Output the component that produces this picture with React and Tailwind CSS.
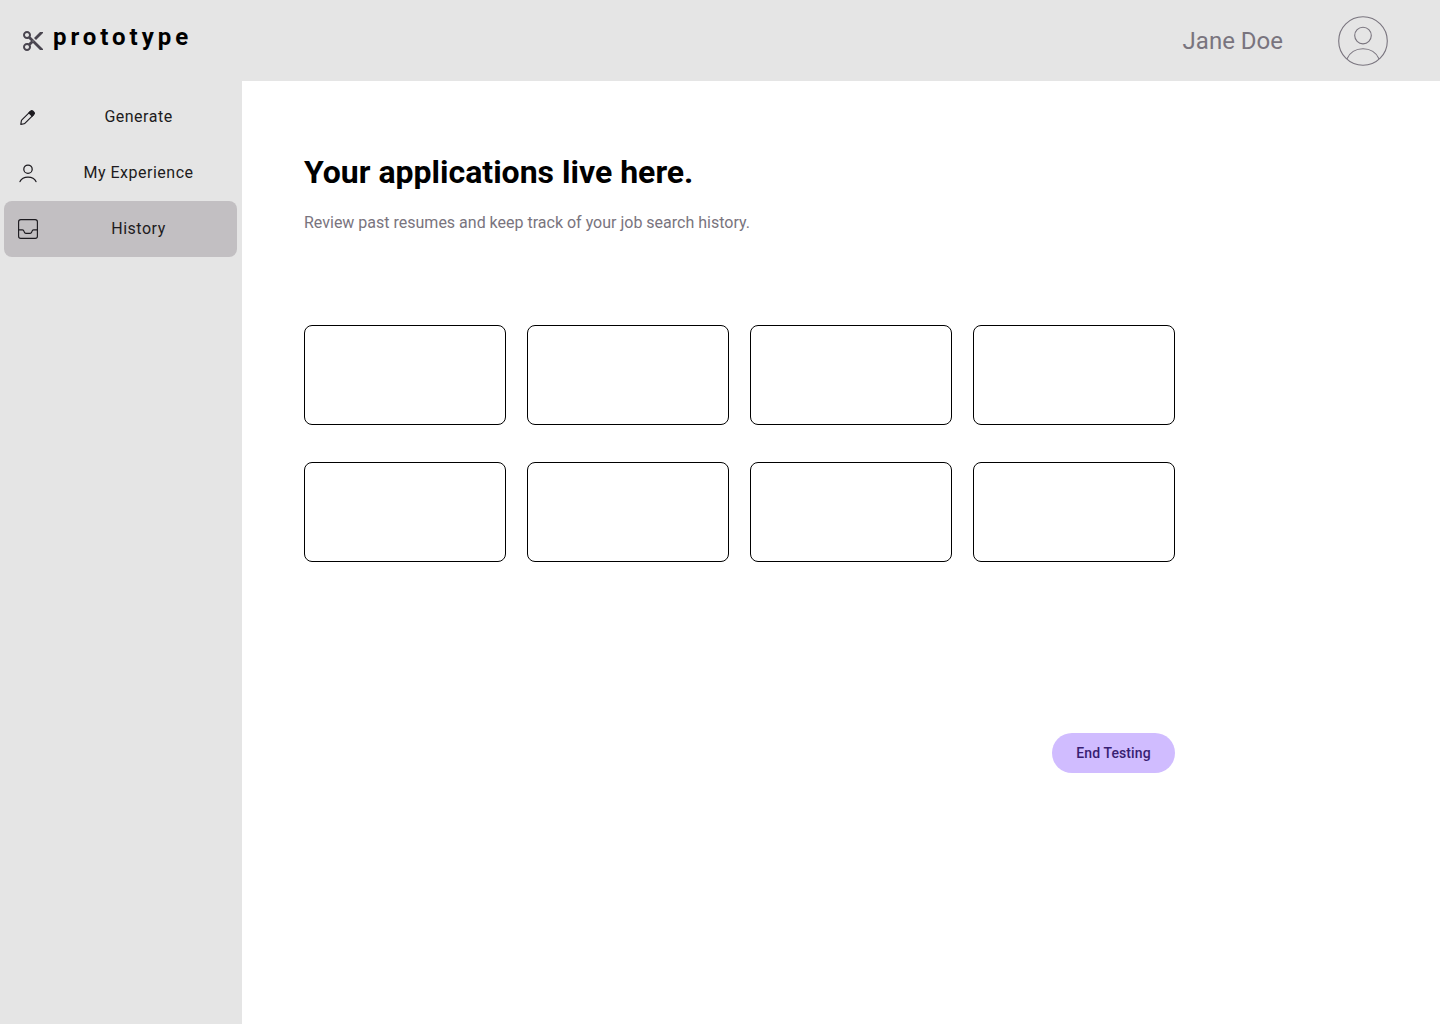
import React from "react";
import { MdContentCut } from "react-icons/md";

function PencilIcon() {
  return (
    <svg width="24" height="24" viewBox="0 0 24 24" fill="none" stroke="#1D1B20" strokeWidth="1.15" strokeLinejoin="round">
      <path d="M4.8 19.4 5.4 15.7Q5.5 15.3 5.9 14.9L14.2 6.6 17.4 9.8 9.1 18.1Q8.7 18.6 8.2 18.7Z" />
      <path d="M12.9 7.9 14.9 5.9Q15.8 5.1 16.7 5.9L18.1 7.3Q18.9 8.2 18.1 9.1L16.1 11.1Z" fill="#1D1B20" />
    </svg>
  );
}

function PersonIcon() {
  return (
    <svg width="24" height="24" viewBox="0 0 24 24" fill="none" stroke="#1D1B20" strokeWidth="1.25" strokeLinecap="round">
      <circle cx="12" cy="8.2" r="4.2" />
      <path d="M4 20.6C5.2 18 8.3 16.2 12 16.2S18.8 18 20 20.6" />
    </svg>
  );
}

function InboxIcon() {
  return (
    <svg width="24" height="24" viewBox="0 0 24 24" fill="none" stroke="#1D1B20" strokeWidth="1.15" strokeLinejoin="round">
      <rect x="2.6" y="2.6" width="18.8" height="18.8" rx="2.2" />
      <path d="M2.6 12.8H6.4C7.5 12.8 7.8 13.4 8 14.4S8.6 16.3 9.8 16.3H14.2C15.4 16.3 15.8 15.4 16 14.4S16.5 12.8 17.6 12.8H21.4" />
    </svg>
  );
}

function AvatarIcon() {
  return (
    <svg width="50" height="50" viewBox="0 0 50 50" fill="none" stroke="#79747E" strokeWidth="1.1">
      <circle cx="25" cy="25" r="24.3" />
      <circle cx="25" cy="19.6" r="8.3" />
      <path d="M8.9 43C11.6 36.8 17.8 32.8 25 32.8S38.4 36.8 41.1 43" />
    </svg>
  );
}

const navItems = [
  { label: "Generate", Icon: PencilIcon },
  { label: "My Experience", Icon: PersonIcon },
  { label: "History", Icon: InboxIcon, active: true },
];

export default function App() {
  return (
    <div className="flex h-screen flex-col bg-white font-[Roboto,sans-serif]">
      <header className="flex h-[81px] shrink-0 justify-between bg-[#e5e5e5] pl-[21px] pr-[52px]">
        <div className="flex items-start gap-2 pt-[21px]">
          <MdContentCut className="mt-2 size-6 text-[#49454F]" />
          <span className="text-2xl leading-8 font-bold tracking-[3.95px] text-black">prototype</span>
        </div>
        <div className="flex items-center gap-[55px]">
          <span className="text-2xl leading-8 text-[#79747E]">Jane Doe</span>
          <AvatarIcon />
        </div>
      </header>
      <div className="flex min-h-0 flex-1">
        <nav className="flex w-[242px] shrink-0 flex-col bg-[#e5e5e5] px-1 pt-2">
          {navItems.map(({ label, Icon, active }) => (
            <button
              key={label}
              className={`flex h-14 w-[233px] items-center rounded-lg pl-3 pr-4 ${active ? "bg-[#C2BFC2]" : ""}`}
            >
              <Icon />
              <span className="ml-4 flex-1 text-center text-base leading-6 tracking-[0.5px] text-[#1D1B20]">
                {label}
              </span>
            </button>
          ))}
        </nav>
        <main className="w-[933px] pt-[71px] pl-[62px]">
          <h1 className="text-[32px] leading-10 font-bold text-black">Your applications live here.</h1>
          <p className="mt-[19px] text-base leading-6 text-[#79747E]">
            Review past resumes and keep track of your job search history.
          </p>
          <div className="mt-[90px] grid grid-cols-4 gap-x-[21px] gap-y-[37px]">
            {Array.from({ length: 8 }, (_, i) => (
              <div key={i} className="h-[100px] rounded-lg border border-black bg-white" />
            ))}
          </div>
          <div className="mt-[171px] flex justify-end">
            <button className="h-10 w-[123px] rounded-full bg-[#D0BCFF] text-sm leading-5 font-medium tracking-[0.1px] text-[#381E72]">
              End Testing
            </button>
          </div>
        </main>
      </div>
    </div>
  );
}
